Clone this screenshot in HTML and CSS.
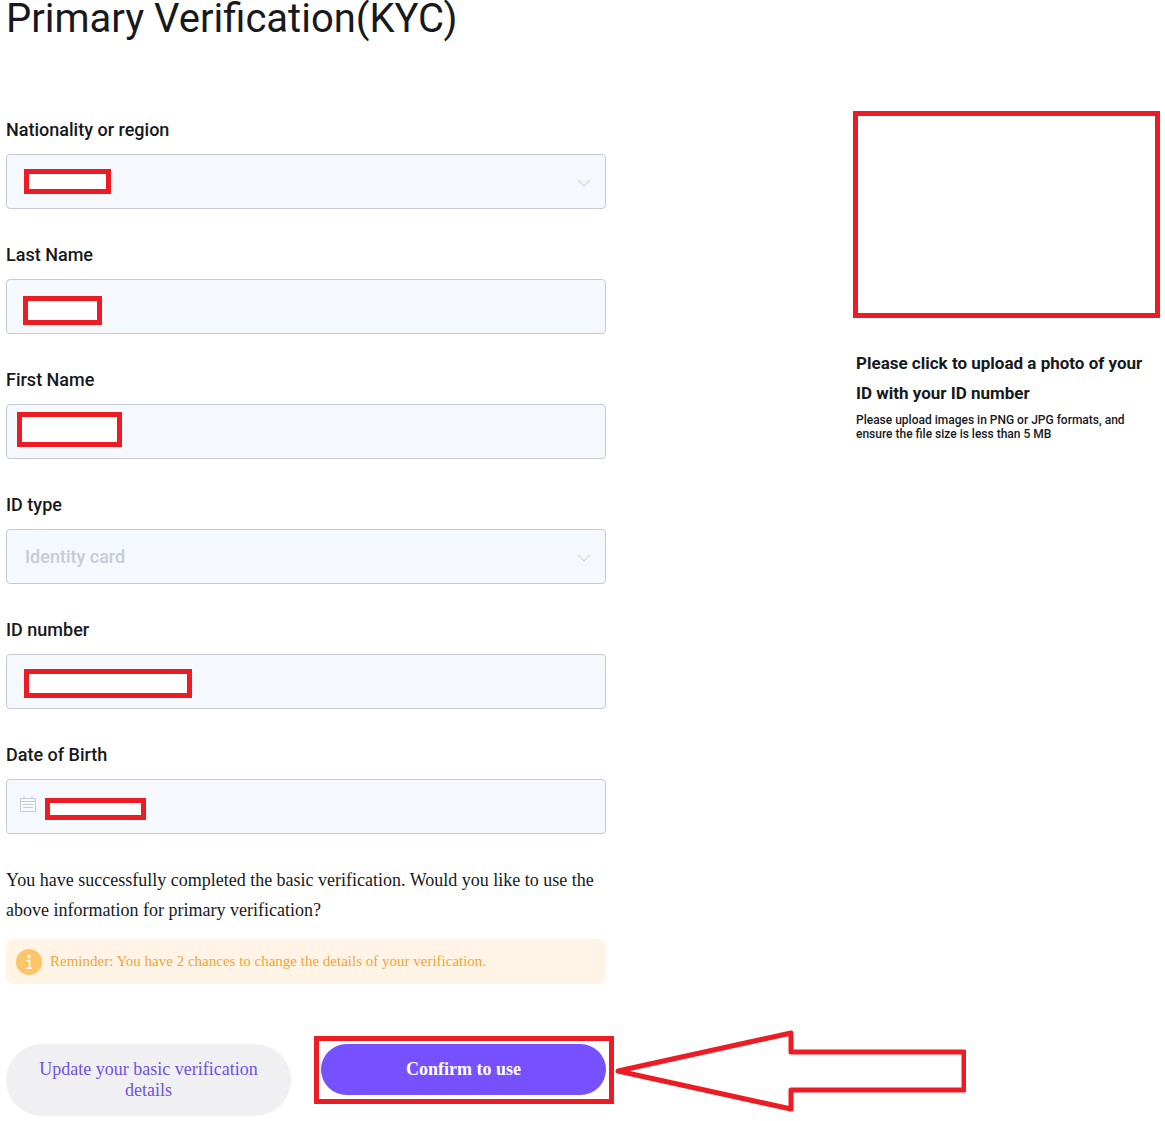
FILE: index.html
```html
<!DOCTYPE html>
<html lang="en">
<head>
    <meta charset="UTF-8">
    <meta name="viewport" content="width=device-width, initial-scale=1.0">
    <title>Primary Verification(KYC)</title>
    <link rel="stylesheet" href="styles.css">
</head>
<body>
    <main class="page">
        <h1 class="title">Primary Verification(KYC)</h1>
        <div class="columns">
            <form class="form">
                <div class="field">
                    <label for="country">Nationality or region</label>
                    <div class="control">
                        <select id="country" disabled><option></option></select>
                        <svg class="arrow-down" viewBox="0 0 14 8"><path d="M1 1l6 6 6-6"/></svg>
                        <span class="mask mask-country"></span>
                    </div>
                </div>
                <div class="field">
                    <label for="lastName">Last Name</label>
                    <div class="control">
                        <input type="text" id="lastName" disabled>
                        <span class="mask mask-last"></span>
                    </div>
                </div>
                <div class="field">
                    <label for="firstName">First Name</label>
                    <div class="control">
                        <input type="text" id="firstName" disabled>
                        <span class="mask mask-first"></span>
                    </div>
                </div>
                <div class="field">
                    <label for="idType">ID type</label>
                    <div class="control">
                        <select id="idType" disabled><option>Identity card</option></select>
                        <svg class="arrow-down" viewBox="0 0 14 8"><path d="M1 1l6 6 6-6"/></svg>
                    </div>
                </div>
                <div class="field">
                    <label for="idNumber">ID number</label>
                    <div class="control">
                        <input type="text" id="idNumber" disabled>
                        <span class="mask mask-number"></span>
                    </div>
                </div>
                <div class="field">
                    <label for="birth">Date of Birth</label>
                    <div class="control">
                        <input type="text" id="birth" disabled>
                        <svg class="calendar" viewBox="0 0 16 16"><path d="M.5 2.5h15v13H.5zM.5 5.5h15M4 0v3M12 0v3M3 8.5h10M3 11.5h10"/></svg>
                        <span class="mask mask-birth"></span>
                    </div>
                </div>

                <p class="question">You have successfully completed the basic verification. Would you like to use the above information for primary verification?</p>

                <div class="reminder">
                    <svg class="info" viewBox="0 0 26 26">
                        <circle cx="13" cy="13" r="13" fill="#fdc46a"/>
                        <circle cx="13" cy="7.5" r="1.7" fill="#fff"/>
                        <path d="M10.5 11.5H13.5V19M10 19.2h6" fill="none" stroke="#fff" stroke-width="1.6"/>
                    </svg>
                    <span>Reminder: You have 2 chances to change the details of your verification.</span>
                </div>

                <div class="buttons">
                    <button type="button" class="btn btn-update">Update your basic verification details</button>
                    <div class="confirm">
                        <button type="submit" class="btn btn-confirm">Confirm to use</button>
                        <span class="mark"></span>
                        <svg class="pointer" viewBox="0 0 352 84"><path d="M4 42L177 4v19h173v38H177v19z"/></svg>
                    </div>
                </div>
            </form>

            <section class="upload">
                <div class="photo">
                    <input type="file" id="photo" accept="image/png, image/jpeg">
                </div>
                <label class="upload-title" for="photo">Please click to upload a photo of your ID with your ID number</label>
                <p class="upload-hint">Please upload images in PNG or JPG formats, and ensure the file size is less than 5 MB</p>
            </section>
        </div>
    </main>
</body>
</html>
```

FILE: styles.css
```css
* {
    box-sizing: border-box;
}
body {
    margin: 0;
    background-color: #fff;
    color: #17191c;
    font-family: Roboto, "Liberation Sans", sans-serif;
}
.page {
    padding: 0 5px 5px 6px;
}
.title {
    margin: 0 0 68px;
    font-size: 40px;
    line-height: 38px;
    font-weight: 400;
}
.columns {
    display: flex;
    justify-content: space-between;
    gap: 40px;
}
.form {
    flex: 0 1 600px;
}

/* fields */
.field {
    margin-bottom: 22px;
}
.field label {
    display: block;
    font-size: 18px;
    line-height: 48px;
    font-weight: 500;
}
.control {
    position: relative;
}
.control input, .control select {
    display: block;
    width: 100%;
    height: 55px;
    padding: 0 18px;
    border: 1px solid #c5cad4;
    border-radius: 4px;
    background-color: #f5f8fc;
    color: #c8cbd4;
    font-family: inherit;
    font-size: 18px;
    font-weight: 500;
    opacity: 1;
    appearance: none;
}
.arrow-down {
    position: absolute;
    top: 25px;
    right: 15px;
    width: 14px;
    height: 8px;
    fill: none;
    stroke: #c0c4cc;
}
.calendar {
    position: absolute;
    top: 17px;
    left: 14px;
    width: 16px;
    height: 16px;
    fill: none;
    stroke: #c8cbd4;
}

/* red boxes over the private data */
.mask {
    position: absolute;
    border: 5px solid #ec1c24;
    background-color: #fff;
}
.mask-country {
    top: 15px;
    left: 18px;
    width: 87px;
    height: 25px;
}
.mask-last {
    top: 17px;
    left: 17px;
    width: 79px;
    height: 29px;
}
.mask-first {
    top: 8px;
    left: 11px;
    width: 105px;
    height: 35px;
}
.mask-number {
    top: 15px;
    left: 18px;
    width: 168px;
    height: 29px;
}
.mask-birth {
    top: 19px;
    left: 39px;
    width: 101px;
    height: 22px;
}

.question, .reminder, .btn {
    font-family: "Liberation Serif", serif;
}
.question {
    margin: 31px 0 14px;
    font-size: 18px;
    line-height: 30px;
}
.reminder {
    display: flex;
    align-items: center;
    gap: 8px;
    min-height: 45px;
    padding: 0 10px;
    border-radius: 8px;
    background-color: #fff4e5;
    color: #f0a53a;
    font-size: 15px;
}
.info {
    flex: none;
    width: 26px;
    height: 26px;
}

/* buttons */
.buttons {
    display: grid;
    grid-template-columns: 1fr 1fr;
    align-items: start;
    gap: 30px;
    margin-top: 60px;
}
.btn {
    display: block;
    width: 100%;
    padding: 15px 30px;
    border: 0;
    border-radius: 36px;
    font-size: 18px;
    line-height: 21px;
    cursor: pointer;
}
.btn-update {
    background-color: #f0f0f3;
    color: #7250e0;
}
.confirm {
    position: relative;
}
.btn-confirm {
    background-color: #7751ff;
    color: #fff;
    font-weight: 700;
}
.mark {
    position: absolute;
    inset: -8px -8px -9px -7px;
    border: 5px solid #ec1c24;
    pointer-events: none;
}
.pointer {
    position: absolute;
    top: -15px;
    left: 100%;
    width: 352px;
    height: 84px;
    margin-left: 8px;
    fill: none;
    stroke: #ec1c24;
    stroke-width: 5;
    stroke-linejoin: round;
    pointer-events: none;
}

/* upload */
.upload {
    flex: 0 1 307px;
    padding-top: 5px;
}
.photo {
    height: 207px;
    margin-bottom: 30px;
    border: 5px solid #ec1c24;
}
.photo input {
    display: block;
    width: 100%;
    height: 100%;
    opacity: 0;
    cursor: pointer;
}
.upload-title {
    display: block;
    padding: 0 3px;
    font-size: 17px;
    line-height: 30px;
    font-weight: 700;
}
.upload-hint {
    margin: 5px 0 0;
    padding: 0 3px;
    font-size: 12px;
    line-height: 14px;
    font-weight: 500;
}
```
